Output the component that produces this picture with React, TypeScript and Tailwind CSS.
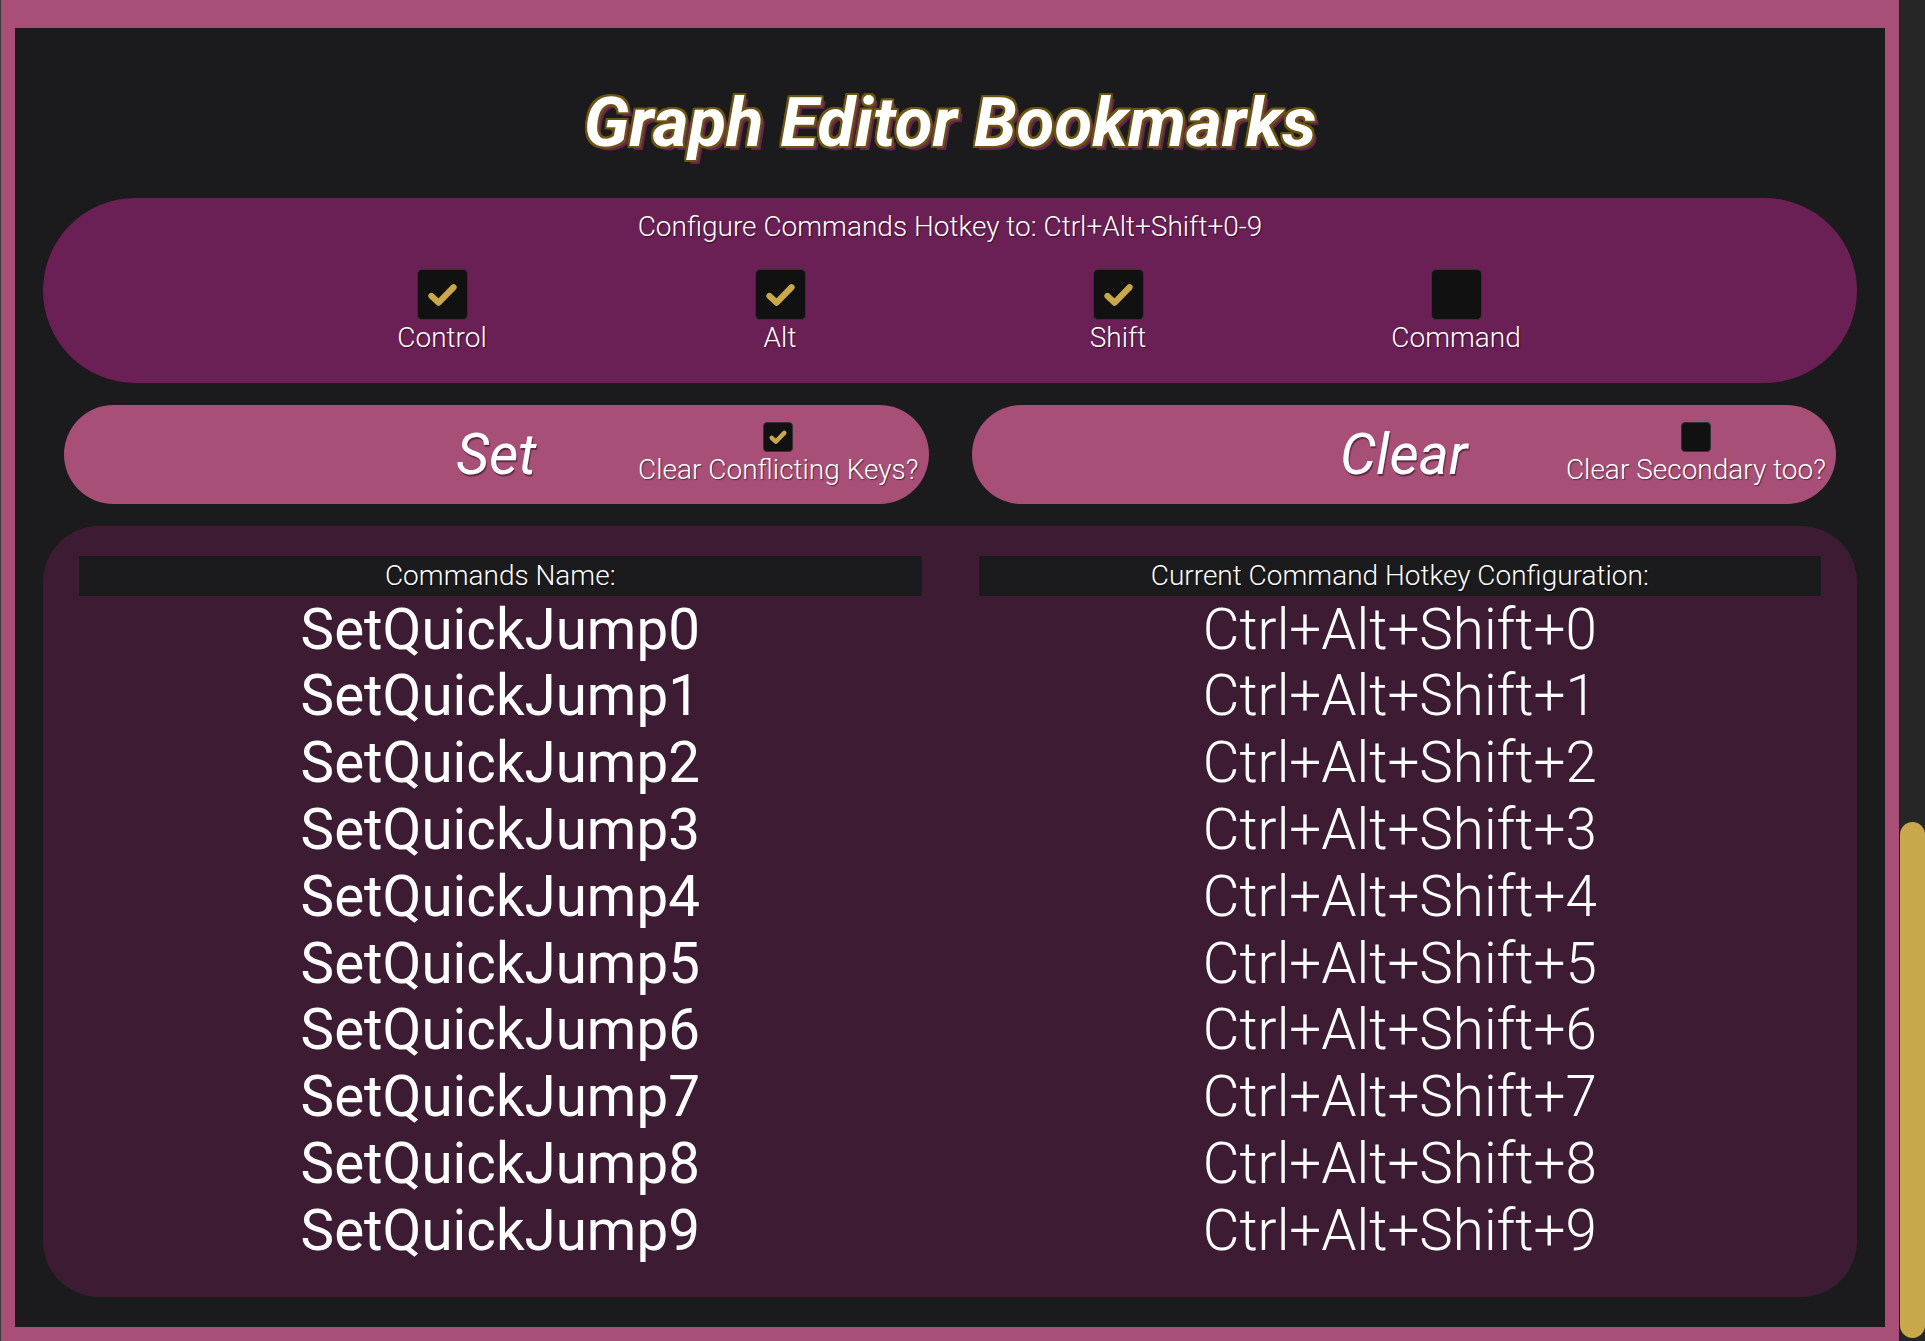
import React from 'react'

const modifiers = [
  { label: 'Control', checked: true },
  { label: 'Alt', checked: true },
  { label: 'Shift', checked: true },
  { label: 'Command', checked: false },
]

const rows = Array.from({ length: 10 }, (_, i) => ({
  name: `SetQuickJump${i}`,
  hotkey: `Ctrl+Alt+Shift+${i}`,
}))

function CheckBox({ checked, size }: { checked: boolean; size: 'lg' | 'sm' }) {
  return (
    <div
      className={`flex items-center justify-center bg-[#111111] border border-[#333333] ${
        size === 'lg' ? 'w-[51px] h-[51px] rounded-[5px]' : 'w-[30px] h-[30px] rounded-[4px]'
      }`}
    >
      {checked && (
        <svg viewBox="0 0 51 51" className="w-full h-full">
          <path
            d="M14 27 L21.5 34 L37 18"
            fill="none"
            stroke="#c9a84b"
            strokeWidth={size === 'lg' ? 6.5 : 8}
            strokeLinecap="round"
            strokeLinejoin="round"
          />
        </svg>
      )}
    </div>
  )
}

function ActionButton({ label, option, checked }: { label: string; option: string; checked: boolean }) {
  return (
    <button className="relative flex-1 h-[99px] rounded-[50px] bg-[#a84f78] flex items-center justify-center">
      <span className="italic text-[57px] text-white [text-shadow:1px_2px_1px_rgba(0,0,0,0.45)]">{label}</span>
      <div className="absolute right-[10px] top-[17px] flex flex-col items-center">
        <CheckBox checked={checked} size="sm" />
        <span className="font-light text-[28px] leading-[36px] text-white [text-shadow:1px_1px_1px_rgba(0,0,0,0.5)]">
          {option}
        </span>
      </div>
    </button>
  )
}

export default function App() {
  return (
    <div className="w-[1925px] h-[1341px] flex bg-[#262626] font-['Roboto','Liberation_Sans',sans-serif] overflow-hidden">
      <div className="w-[1899px] h-full bg-[#a84f78] border-l border-[#3b3b3b] pl-[14px] pr-[14px] pt-[28px] pb-[14px]">
        <div className="h-full bg-[#1b1b1d] px-[28px] flex flex-col">
          <div className="h-[170px] pt-[20px] flex items-center justify-center">
            <h1
              className="italic font-bold text-[69px] text-white [text-shadow:2px_0_0_#6b5512,-2px_0_0_#6b5512,0_2px_0_#6b5512,0_-2px_0_#6b5512,2px_2px_0_#6b5512,-2px_-2px_0_#6b5512,2px_-2px_0_#6b5512,-2px_2px_0_#6b5512,4px_4px_0_#6a1f55]"
            >
              Graph Editor Bookmarks
            </h1>
          </div>

          <div className="h-[185px] rounded-full bg-[#6a1f55] pt-[13px]">
            <p className="text-center font-light text-[28px] leading-[32px] text-white [text-shadow:1px_1px_1px_rgba(0,0,0,0.5)]">
              Configure Commands Hotkey to: Ctrl+Alt+Shift+0-9
            </p>
            <div className="mt-[26px] ml-[230px] w-[1352px] grid grid-cols-4">
              {modifiers.map((m) => (
                <div key={m.label} className="flex flex-col items-center">
                  <CheckBox checked={m.checked} size="lg" />
                  <span className="font-light text-[28px] leading-[36px] text-white [text-shadow:1px_1px_1px_rgba(0,0,0,0.5)]">
                    {m.label}
                  </span>
                </div>
              ))}
            </div>
          </div>

          <div className="mt-[22px] px-[21px] flex gap-[43px]">
            <ActionButton label="Set" option="Clear Conflicting Keys?" checked />
            <ActionButton label="Clear" option="Clear Secondary too?" checked={false} />
          </div>

          <div className="mt-[22px] h-[771px] rounded-[56px] bg-[#3d1c33] pt-[30px] px-[36px]">
            <div className="grid grid-cols-2 gap-x-[57px]">
              <div className="h-[40px] bg-[#1b1b1d] flex items-center justify-center font-light text-[28px] text-white [text-shadow:1px_1px_1px_rgba(0,0,0,0.6)]">
                Commands Name:
              </div>
              <div className="h-[40px] bg-[#1b1b1d] flex items-center justify-center font-light text-[28px] text-white [text-shadow:1px_1px_1px_rgba(0,0,0,0.6)]">
                Current Command Hotkey Configuration:
              </div>
              {rows.map((r) => (
                <React.Fragment key={r.name}>
                  <div className="h-[66.8px] pt-[1px] flex items-center justify-center text-[56.5px] text-white">{r.name}</div>
                  <div className="h-[66.8px] pt-[1px] flex items-center justify-center font-light text-[56.5px] text-white">
                    {r.hotkey}
                  </div>
                </React.Fragment>
              ))}
            </div>
          </div>
        </div>
      </div>

      <div className="w-[26px] h-full flex justify-center border-l border-[#1e1e1e]">
        <div className="mt-[822px] mb-[3px] w-[14px] flex-1 rounded-full bg-[#c9a84b]" />
      </div>
    </div>
  )
}
